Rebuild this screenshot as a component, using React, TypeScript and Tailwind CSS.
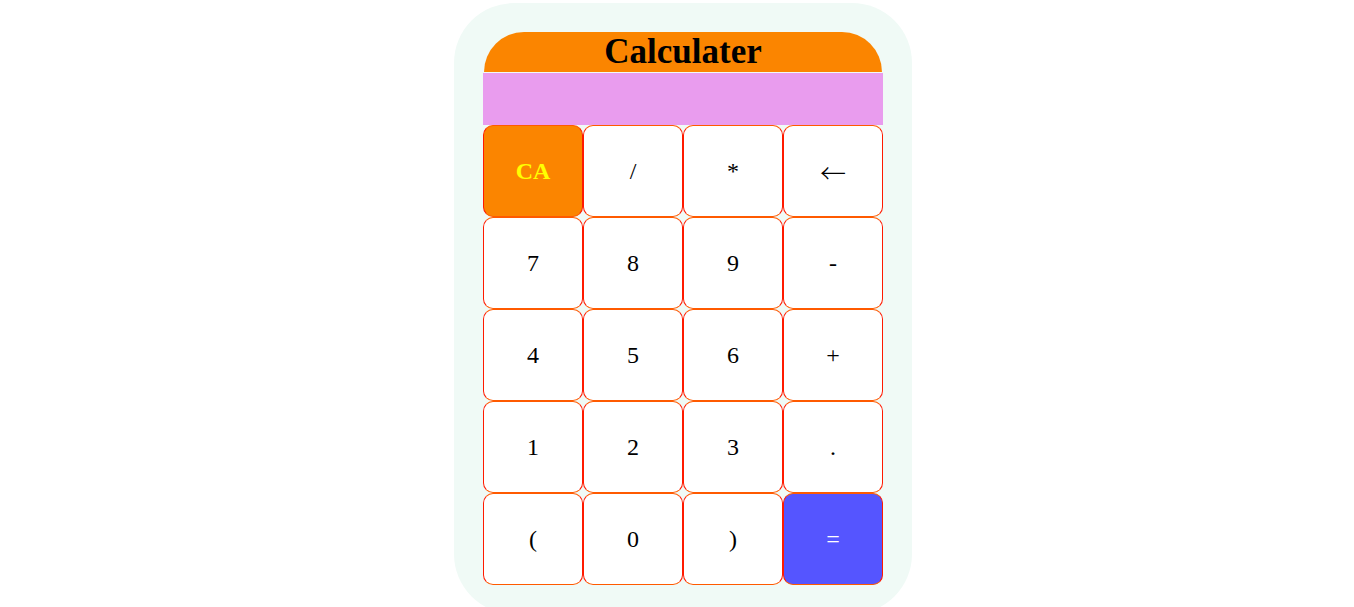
import React from "react";

const rows: string[][] = [
  ["CA", "/", "*", "←"],
  ["7", "8", "9", "-"],
  ["4", "5", "6", "+"],
  ["1", "2", "3", "."],
  ["(", "0", ")", "="],
];

export default function App() {
  return (
    <div className="w-full flex justify-center pl-3" style={{ fontFamily: '"Liberation Serif", "Times New Roman", serif' }}>
      <div className="mt-[3px] w-[458px] bg-[#f0faf6] rounded-[60px] px-[29px] pt-[29px] pb-[29px]">
        <div className="mx-px h-[40px] bg-[#fb8500] rounded-t-[40px] flex items-center justify-center">
          <span className="text-[35px] font-bold leading-[40px] text-black">Calculater</span>
        </div>
        <div className="mt-px h-[52px] bg-[#e99cee]" />
        <div className="grid grid-cols-4">
          {rows.flat().map((k, i) => {
            const isCA = k === "CA";
            const isEq = k === "=";
            const isArrow = k === "←";
            return (
              <button
                key={i}
                className={
                  "h-[92px] w-[100px] rounded-[10px] border border-x-[#ff1a00] border-y-[#ff5a00] flex items-center justify-center " +
                  (isArrow ? "text-[26px] font-['Noto_Sans_CJK_JP',sans-serif] font-light " : "text-[24px] ") +
                  (isCA
                    ? "bg-[#fb8500] text-[#ffff00] font-bold"
                    : isEq
                    ? "bg-[#5555ff] text-white"
                    : "bg-white text-black")
                }
              >
                {k}
              </button>
            );
          })}
        </div>
      </div>
    </div>
  );
}
